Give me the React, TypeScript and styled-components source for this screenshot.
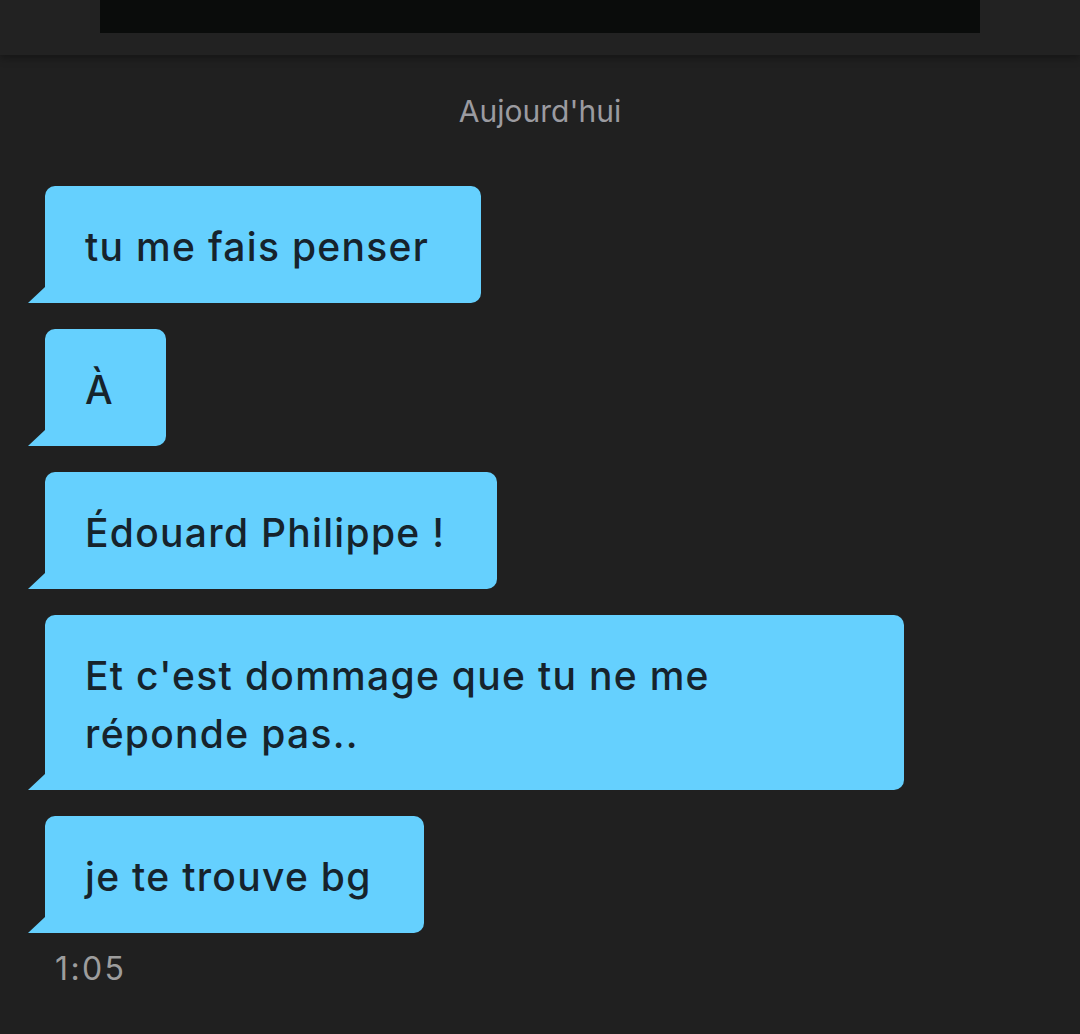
import React from "react";
import styled, { createGlobalStyle } from "styled-components";

const Global = createGlobalStyle`
  html, body { margin: 0; padding: 0; background: #202020; }
  body { font-family: Inter, "Noto Sans", sans-serif; }
`;

const Page = styled.div`
  width: 1080px;
  height: 1034px;
  background: #202020;
  overflow: hidden;
  display: flex;
  flex-direction: column;
`;

const TopBar = styled.div`
  height: 55px;
  background: #222222;
  display: flex;
  padding-left: 100px;
  box-shadow: 0 3px 8px rgba(0, 0, 0, 0.35);
  position: relative;
  z-index: 1;
`;

const Screen = styled.div`
  width: 880px;
  height: 33px;
  background: #0a0c0b;
`;

const Thread = styled.div`
  display: flex;
  flex-direction: column;
  align-items: flex-start;
  padding: 0 0 0 45px;
`;

const DateLabel = styled.div`
  align-self: stretch;
  margin: 36px 0 55px -45px;
  text-align: center;
  font-size: 30px;
  line-height: 40px;
  color: #9b9ba0;
`;

const Bubbles = styled.div`
  display: flex;
  flex-direction: column;
  align-items: flex-start;
  gap: 26px;
`;

const Bubble = styled.div`
  position: relative;
  max-width: 859px;
  box-sizing: border-box;
  padding: 32px 52px 27px 40px;
  background: #65d0fe;
  color: #16232c;
  font-size: 39px;
  font-weight: 500;
  letter-spacing: 1.3px;
  line-height: 58px;
  border-radius: 10px 10px 10px 0;

  &::before {
    content: "";
    position: absolute;
    left: -17px;
    bottom: 0;
    width: 17px;
    height: 16px;
    background: #65d0fe;
    clip-path: polygon(100% 0, 100% 100%, 0 100%);
  }
`;

const Time = styled.div`
  margin: 16px 0 0 10px;
  font-size: 32px;
  letter-spacing: 2.4px;
  line-height: 40px;
  color: #9d9d9d;
`;

const messages = [
  "tu me fais penser",
  "À",
  "Édouard Philippe !",
  "Et c'est dommage que tu ne me réponde pas..",
  "je te trouve bg",
];

export default function App() {
  return (
    <Page>
      <Global />
      <TopBar>
        <Screen />
      </TopBar>
      <Thread>
        <DateLabel>Aujourd'hui</DateLabel>
        <Bubbles>
          {messages.map((m, i) => (
            <Bubble key={i}>{m}</Bubble>
          ))}
        </Bubbles>
        <Time>1:05</Time>
      </Thread>
    </Page>
  );
}
